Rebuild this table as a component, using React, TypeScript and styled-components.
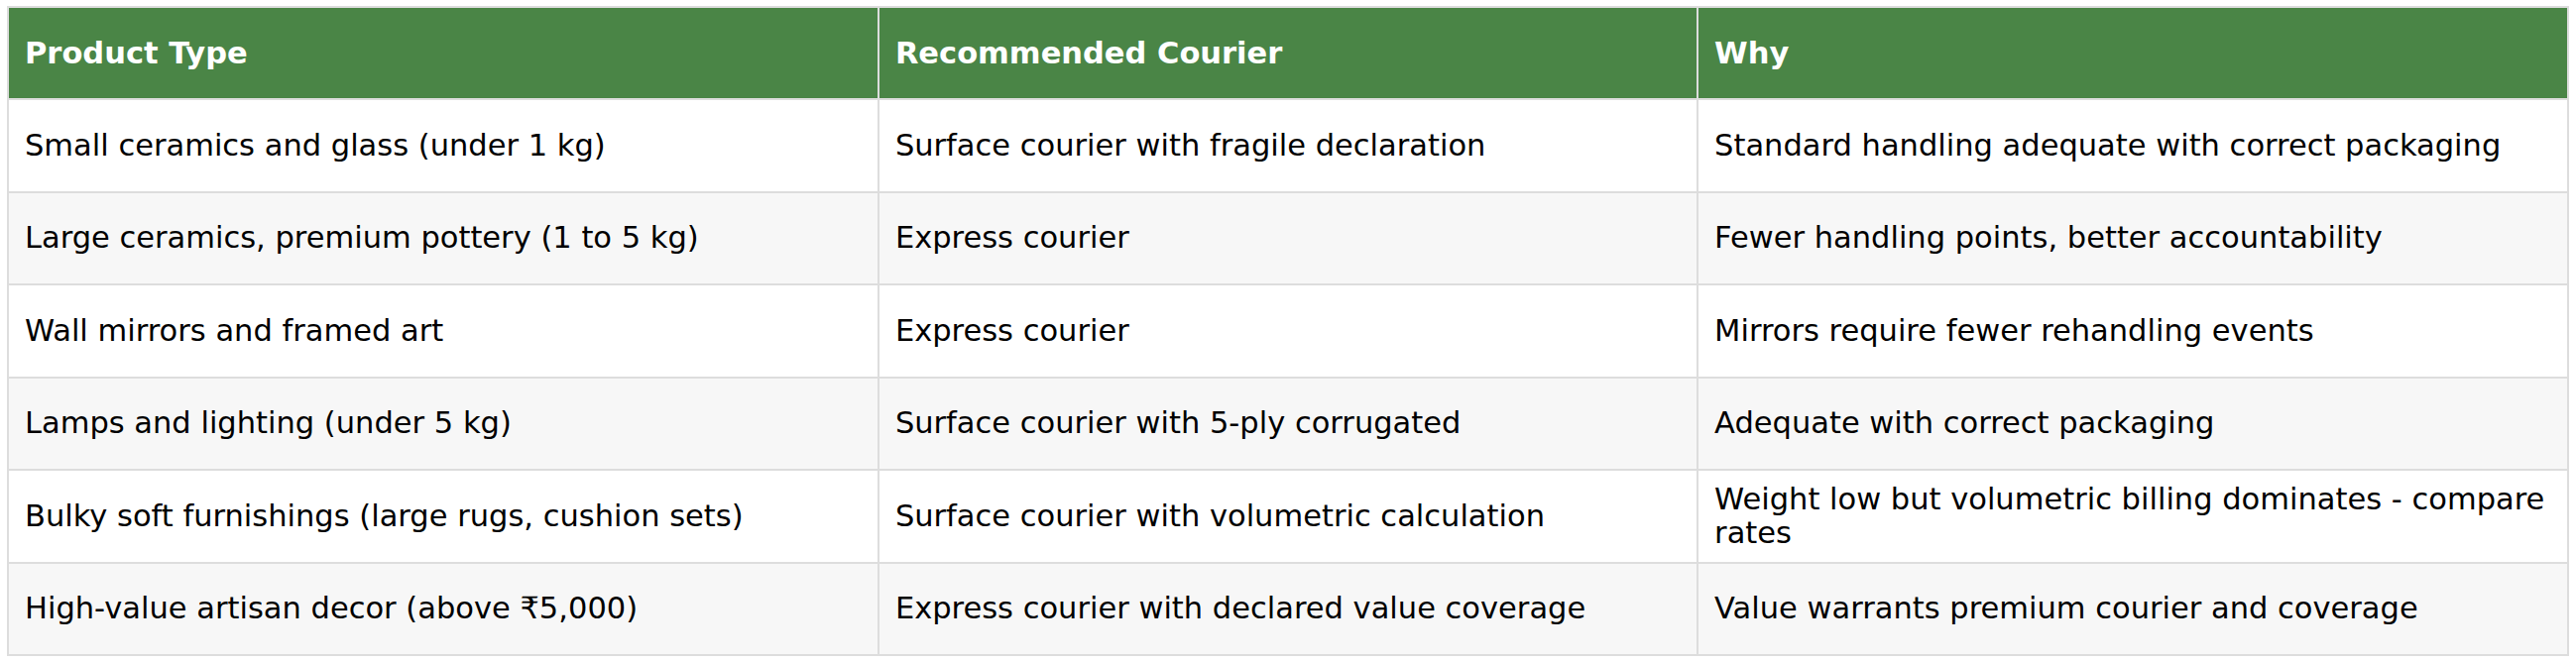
import React from 'react';
import styled, { createGlobalStyle } from 'styled-components';

const GlobalStyle = createGlobalStyle`
    html, body {
        margin: 0;
        padding: 0;
        background: #ffffff;
    }
    body {
        font-family: "DejaVu Sans", Verdana, sans-serif;
    }
`;

type Row = { product: string; courier: string; why: string };

const rows: Row[] = [
    {
        product: 'Small ceramics and glass (under 1 kg)',
        courier: 'Surface courier with fragile declaration',
        why: 'Standard handling adequate with correct packaging',
    },
    {
        product: 'Large ceramics, premium pottery (1 to 5 kg)',
        courier: 'Express courier',
        why: 'Fewer handling points, better accountability',
    },
    {
        product: 'Wall mirrors and framed art',
        courier: 'Express courier',
        why: 'Mirrors require fewer rehandling events',
    },
    {
        product: 'Lamps and lighting (under 5 kg)',
        courier: 'Surface courier with 5-ply corrugated',
        why: 'Adequate with correct packaging',
    },
    {
        product: 'Bulky soft furnishings (large rugs, cushion sets)',
        courier: 'Surface courier with volumetric calculation',
        why: 'Weight low but volumetric billing dominates - compare rates',
    },
    {
        product: 'High-value artisan decor (above ₹5,000)',
        courier: 'Express courier with declared value coverage',
        why: 'Value warrants premium courier and coverage',
    },
];

export default function App() {
    return (
        <Page>
            <GlobalStyle />
            <Table>
                <colgroup>
                    <Col $width={34} />
                    <Col $width={32} />
                    <Col $width={34} />
                </colgroup>
                <thead>
                    <tr>
                        <HeadCell>Product Type</HeadCell>
                        <HeadCell>Recommended Courier</HeadCell>
                        <HeadCell>Why</HeadCell>
                    </tr>
                </thead>
                <tbody>
                    {rows.map((row, index) => (
                        <BodyRow key={index} $striped={index % 2 === 1}>
                            <Cell>{row.product}</Cell>
                            <Cell>{row.courier}</Cell>
                            <Cell>{row.why}</Cell>
                        </BodyRow>
                    ))}
                </tbody>
            </Table>
        </Page>
    );
}

const Page = styled.div`
    padding: 6px 7px 0 7px;
`;

const Table = styled.table`
    width: 100%;
    border-collapse: collapse;
    table-layout: fixed;
    font-size: 30.5px;
    color: #000000;
`;

const Col = styled.col<{ $width: number }>`
    width: ${(p) => p.$width}%;
`;

const HeadCell = styled.th`
    height: 93px;
    box-sizing: border-box;
    background: #4a8546;
    color: #ffffff;
    font-weight: bold;
    text-align: left;
    vertical-align: middle;
    padding: 0 16px;
    border: 2px solid #dddddd;
`;

const BodyRow = styled.tr<{ $striped: boolean }>`
    background: ${(p) => (p.$striped ? '#f7f7f7' : '#ffffff')};
`;

const Cell = styled.td`
    height: 93.5px;
    box-sizing: border-box;
    text-align: left;
    vertical-align: middle;
    padding: 0 16px;
    border: 2px solid #dddddd;
    line-height: 1.1;
`;
